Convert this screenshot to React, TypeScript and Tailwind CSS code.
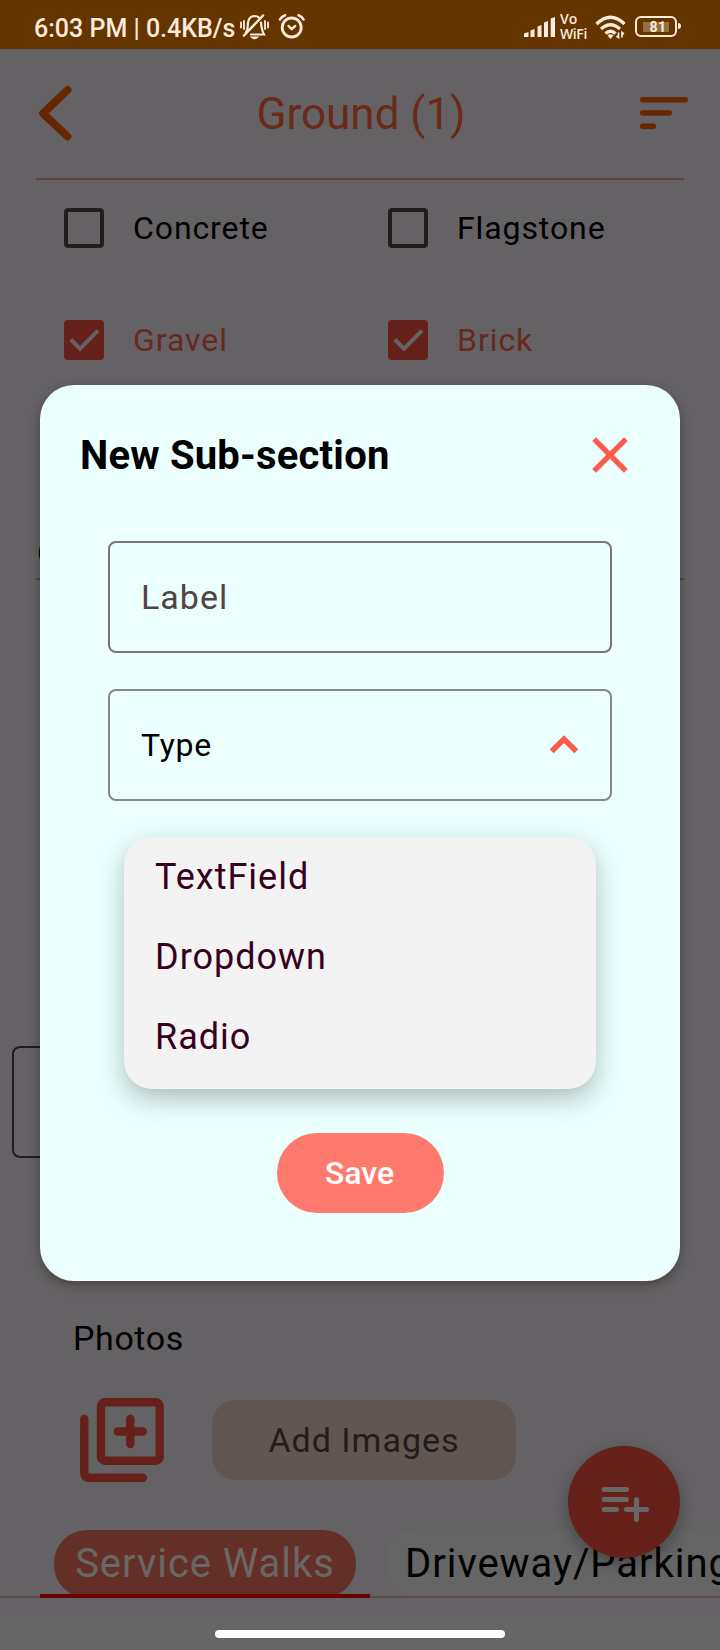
import React from "react";

function StatusBar() {
  return (
    <div className="flex h-[49px] shrink-0 items-start bg-[#653500] text-[#fcebdd]">
      <span className="mt-[13px] ml-[34px] w-[206px] shrink-0 text-[25px] leading-[32px] font-medium whitespace-nowrap">
        6:03 PM | 0.4KB/s
      </span>
      <svg className="mt-[13px] h-[28px] w-[30px] shrink-0" viewBox="0 0 30 28" fill="none" stroke="currentColor" strokeWidth="2.200" strokeLinecap="round">
        <path d="M6 19.5C8.5 16 7.5 13 8 9.5C8.6 5.500 11 3.200 14.500 3C16.500 3 18 3.500 19.200 4.700M21 9.500C21.300 14 21.500 17 24 21.500H11" />
        <path d="M23 2.500L4 22.500" strokeWidth="2.500" />
        <path d="M1 9.500V14.500M4 8V16M25 8V16M28 9.500V14.500" strokeWidth="1.800" />
        <path d="M12 24.300Q14.500 26.300 17 24.300Z" strokeWidth="1.800" fill="currentColor" />
      </svg>
      <svg className="mt-[13px] ml-[8px] h-[28px] w-[28px] shrink-0" viewBox="0 0 28 28" fill="none" stroke="currentColor" strokeWidth="2.800" strokeLinecap="round" strokeLinejoin="round">
        <circle cx="13.700" cy="14.500" r="9.500" />
        <path d="M10.500 13L13.700 16.200L17.200 13" strokeWidth="2.400" />
        <path d="M2 6.500Q3.500 3.500 7 2.300M25.500 6.500Q24 3.500 20.500 2.300" strokeWidth="2.600" />
      </svg>
      <svg className="mt-[16px] ml-[218px] h-[22px] w-[32px] shrink-0" viewBox="0 0 32 22" fill="currentColor">
        <path d="M0 17.500L4.500 16V21H0ZM6.500 14.500L10.500 13V21H6.500ZM13.500 10.500L17.500 9V21H13.500ZM20 6.500L24 5V21H20ZM26.700 2.500L31 1V21H26.700Z" />
      </svg>
      <div className="mt-[12px] ml-[4px] flex w-[35px] shrink-0 flex-col gap-px font-['Open_Sans'] text-[14px] leading-[14px] font-semibold">
        <span>Vo</span>
        <span className="tracking-[-0.4px]">WiFi</span>
      </div>
      <svg className="mt-[15px] h-[26px] w-[32px] shrink-0" viewBox="0 0 32 26" fill="none" stroke="currentColor" strokeWidth="3.300">
        <path d="M1.500 9Q15.500 -4.500 29.500 9" />
        <path d="M6 14Q15.500 5.500 25 14" />
        <path d="M10.500 18.500Q15.500 14 20.500 18.500" />
        <path d="M12.500 20.500Q15.500 18 18.500 20.500L15.500 24Z" fill="currentColor" stroke="none" />
        <path d="M23.500 17.500V22.500L21.500 21M27 22.500V17.500L29 19" strokeWidth="1.700" />
      </svg>
      <div className="mt-[16px] ml-[8px] flex h-[21px] w-[42px] shrink-0 items-center justify-center rounded-[6px] border-2 border-current">
        <div className="flex h-[10px] w-[26px] items-center justify-center bg-[#94713f] pl-1 text-[14px] leading-[10px] font-bold tracking-[0.5px]">81</div>
      </div>
      <div className="mt-[23px] ml-[1px] h-[6px] w-[3px] shrink-0 rounded-r-sm bg-current" />
    </div>
  );
}

function Header() {
  return (
    <header className="flex h-[131px] shrink-0 flex-col px-[36px]">
      <div className="flex h-[129px] items-start justify-between">
        <svg className="mt-[36px] h-[56px] w-[40px]" viewBox="0 0 40 56" fill="none" stroke="#662700" strokeWidth="7.800" strokeLinecap="round" strokeLinejoin="round">
          <path d="M31.500 5L7 28.300L31.500 51.500" />
        </svg>
        <h1 className="mt-[39px] ml-[6px] text-[44px] leading-[52px] text-[#692a18]">Ground (1)</h1>
        <svg className="mt-[47px] -mr-[4px] h-[34px] w-[48px]" viewBox="0 0 48 34" fill="#662700">
          <rect y="1" width="48" height="5.400" rx="2.700" />
          <rect y="14.300" width="32" height="5.400" rx="2.700" />
          <rect y="27.600" width="16" height="5.400" rx="2.700" />
        </svg>
      </div>
      <div className="h-[2px] bg-[#693f3d]" />
    </header>
  );
}

function CheckItem({ label, checked }: { label: string; checked?: boolean }) {
  return (
    <div className="flex h-[40px] items-center gap-[29px]">
      {checked ? (
        <svg className="h-[40px] w-[40px]" viewBox="0 0 40 40">
          <rect width="40" height="40" rx="4" fill="#66211a" />
          <path d="M6.700 19.500L16 28.700L34 10.700" fill="none" stroke="#666366" strokeWidth="4" />
        </svg>
      ) : (
        <div className="h-[40px] w-[40px] rounded-[4px] border-4 border-[#211d1a]" />
      )}
      <span className={checked ? "text-[32px] leading-[40px] tracking-[0.95px] text-[#66291f]" : "text-[32px] leading-[40px] tracking-[0.9px] text-black"}>
        {label}
      </span>
    </div>
  );
}

function Page() {
  return (
    <div className="flex h-[1650px] w-[720px] flex-col">
      <StatusBar />
      <Header />
      <div className="mt-[28px] ml-[64px] grid shrink-0 grid-cols-[324px_1fr] gap-y-[72px]">
        <CheckItem label="Concrete" />
        <CheckItem label="Flagstone" />
        <CheckItem label="Gravel" checked />
        <CheckItem label="Brick" checked />
      </div>
      <div className="mx-[36px] mt-[173px] h-[47px] shrink-0 border-b-2 border-[#673f38] pl-px text-[32px] leading-[40px]">C</div>
      <div className="mr-[60px] ml-[12px] mt-[466px] h-[112px] shrink-0 rounded-[8px] border-2 border-[#1d1b1d]" />
      <div className="mt-[160px] ml-[73px] h-[40px] shrink-0 text-[34px] leading-[40px] tracking-[0.6px]">Photos</div>
      <div className="mt-[40px] ml-[80px] flex shrink-0 items-center gap-[48px]">
        <svg className="h-[84px] w-[84px]" viewBox="0 0 84 84" fill="none" stroke="#66211a" strokeWidth="8.400" strokeLinecap="round">
          <rect x="21" y="4.200" width="58.700" height="58.500" rx="4" />
          <path d="M50.300 21V46M37.800 33.500H62.800M4.300 21V75.500Q4.300 79.700 8.500 79.700H62.800" />
        </svg>
        <div className="flex h-[80px] w-[304px] items-center justify-center rounded-[24px] bg-[#625652] text-[34px] tracking-[1px] text-[#231c1a]">
          Add Images
        </div>
      </div>
      <div className="mt-[48px] flex h-[68px] shrink-0 overflow-x-clip">
        <div className="flex h-[68px] w-[40px] shrink-0 border-b-2 border-[#5a4d4a]" />
        <div className="flex h-[68px] w-[330px] shrink-0 flex-col items-center overflow-hidden border-b-4 border-[#660000]">
          <div className="flex h-[68px] w-[302px] shrink-0 items-center justify-center rounded-[33px] bg-[#652f29] text-[40px] leading-[48px] tracking-[0.95px] whitespace-nowrap text-[#696765]">
            Service Walks
          </div>
        </div>
        <div className="flex h-[68px] w-[350px] shrink-0 border-b-2 border-[#5a4d4a] pl-[16px]">
          <div className="flex h-[66px] flex-1 items-center rounded-l-[30px] bg-[#656565] pt-[2px] pl-[19px] text-[40px] leading-[48px] tracking-[0.95px] whitespace-nowrap">
            Driveway/Parking
          </div>
        </div>
      </div>
      <div className="mt-[19px] flex h-[33px] shrink-0 justify-center bg-[#666666] pt-[13px]">
        <div className="h-[8px] w-[290px] rounded-full bg-white" />
      </div>
    </div>
  );
}

function NewSubSectionDialog() {
  return (
    <section className="absolute top-[385px] left-[40px] flex h-[896px] w-[640px] flex-col rounded-[34px] bg-[#ebffff] shadow-[0_5px_0_-2px_#554b48,0_4px_12px_rgba(0,0,0,0.3)]">
      <div className="flex h-[140px] items-center justify-between pr-[40px] pl-[40px]">
        <h2 className="pt-[2px] text-[40px] leading-[48px] font-bold tracking-[0.2px]">New Sub-section</h2>
        <svg className="h-[60px] w-[60px]" viewBox="0 0 24 24" fill="#fb5b4a" stroke="#fb5b4a" strokeWidth="0.200">
          <path d="M19 6.410L17.590 5L12 10.590L6.410 5L5 6.410L10.590 12L5 17.590L6.410 19L12 13.410L17.590 19L19 17.590L13.410 12Z" />
        </svg>
      </div>
      <div className="mt-[16px] ml-[68px] flex h-[112px] w-[504px] items-center rounded-[8px] border-2 border-[#7d7471] pl-[31px] text-[34px] tracking-[1px] text-[#524440]">
        Label
      </div>
      <div className="mt-[36px] ml-[68px] flex h-[112px] w-[504px] items-center justify-between rounded-[8px] border-2 border-[#858889] pr-[18px] pl-[31px] text-[32px] tracking-[0.7px]">
        <span>Type</span>
        <svg className="h-[56px] w-[56px]" viewBox="0 0 24 24" fill="#fb5b4a">
          <path d="M12 7.800L5.900 13.850L7.600 15.500L12 11.150L16.400 15.500L18.100 13.850Z" />
        </svg>
      </div>
      <ul className="mt-[36px] ml-[84px] flex h-[252px] w-[472px] flex-col rounded-[28px] bg-[#f3f3f3] pl-[31px] text-[36px] leading-[80px] tracking-[1px] text-[#38001f] shadow-[0_10px_26px_rgba(0,0,0,0.26)]">
        <li>TextField</li>
        <li>Dropdown</li>
        <li>Radio</li>
      </ul>
      <button className="mt-[44px] ml-[237px] h-[80px] w-[167px] rounded-full bg-[#ff7a6e] pr-[2px] text-[32px] font-medium text-white">
        Save
      </button>
    </section>
  );
}

function AddButton() {
  return (
    <button className="absolute top-[1446px] left-[568px] h-[112px] w-[112px] rounded-full bg-[#66211a] shadow-[0_6px_16px_rgba(0,0,0,0.3)]">
      <svg className="h-[112px] w-[112px]" viewBox="0 0 112 112" fill="none" stroke="#696765" strokeWidth="5" strokeLinecap="round">
        <path d="M36.200 43.500H58.400M36.200 53.500H58.400M36.200 63.500H48.400M58.500 63.500H78.500M68.500 53.500V73.500" />
      </svg>
    </button>
  );
}

export default function App() {
  return (
    <main className="relative h-[1650px] w-[720px] overflow-hidden bg-[#656265] font-['Roboto',sans-serif] text-black">
      <Page />
      <AddButton />
      <NewSubSectionDialog />
    </main>
  );
}
